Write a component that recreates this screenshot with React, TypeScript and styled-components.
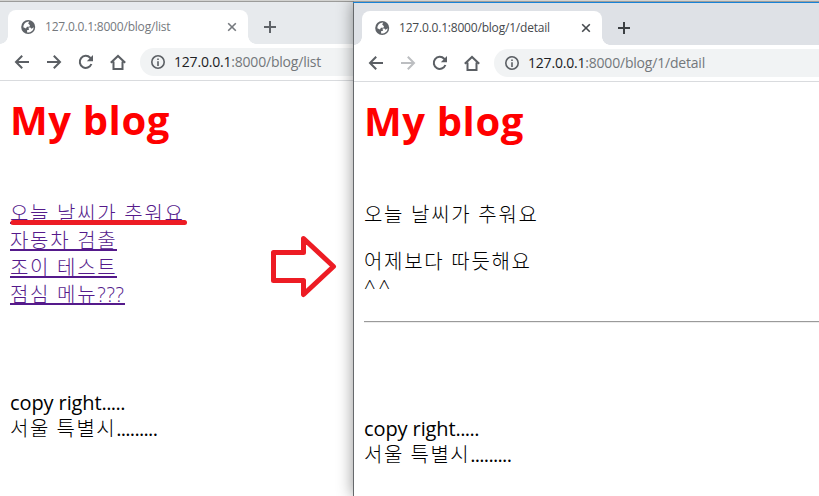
import React from "react";
import styled, { createGlobalStyle } from "styled-components";

const Global = createGlobalStyle`
  * { box-sizing: border-box; }
  html, body { margin: 0; padding: 0; overflow: hidden; background: #fff; }
`;

const latin = `"Open Sans", "Noto Sans", sans-serif`;
const mixed = `"Open Sans", "Noto Sans CJK KR", sans-serif`;

const Desktop = styled.div`
  width: 819px;
  height: 496px;
  border-top: 1px solid #d3d3d1;
  display: grid;
  grid-template-columns: 353px 466px;
  overflow: hidden;
  background: #fff;
  position: relative;
`;

const Window = styled.section<{ $active?: boolean }>`
  height: 495px;
  background: #fff;
  border-top: 1px solid #9c9c9a;
  min-width: 0;
  position: relative;
  ${(p) =>
    p.$active &&
    `border-left: 1px solid #66696c;
     box-shadow: 0 0 15px rgba(0, 0, 0, 0.42);`}
`;

const TitleEdge = styled.div`
  height: 1px;
  margin-left: -1px;
  background: #1883d7;
`;

const TabStrip = styled.div<{ $active?: boolean }>`
  height: 42px;
  padding: 8px 0 0 8px;
  display: flex;
  background: ${(p) => (p.$active ? "#dee1e6" : "#e7eaed")};
`;

const Tab = styled.div<{ $active?: boolean }>`
  width: 240px;
  height: 34px;
  padding: 0 11px 0 13px;
  display: flex;
  align-items: center;
  background: #fff;
  border-radius: 8px 8px 0 0;
  position: relative;
  color: ${(p) => (p.$active ? "#45494d" : "#75797e")};
  &::before, &::after {
    content: "";
    position: absolute;
    bottom: 0;
    width: 8px;
    height: 8px;
  }
  &::before { left: -8px; background: radial-gradient(circle at 0 0, transparent 7.5px, #fff 8px); }
  &::after { right: -8px; background: radial-gradient(circle at 100% 0, transparent 7.5px, #fff 8px); }
`;

const TabTitle = styled.span<{ $spacing: number }>`
  flex: 1;
  margin-left: 8px;
  font: 12px/16px ${latin};
  letter-spacing: ${(p) => p.$spacing}px;
  white-space: nowrap;
`;

const NewTab = styled.div<{ $active?: boolean }>`
  margin: 10px 0 0 15px;
  height: 14px;
  color: ${(p) => (p.$active ? "#3c4043" : "#5f6368")};
`;

const Toolbar = styled.div`
  height: 37px;
  padding: 4px 0 4px 14px;
  display: flex;
  align-items: center;
  border-bottom: 1px solid #d9dbde;
  color: #5b5f64;
`;

const NavButton = styled.span<{ $muted?: boolean }>`
  width: 32px;
  height: 16px;
  flex: none;
  color: ${(p) => (p.$muted ? "#bcbec1" : "inherit")};
`;

const AddressBar = styled.div`
  flex: 1;
  min-width: 0;
  height: 28px;
  margin-left: -2px;
  padding-left: 10px;
  border-radius: 14px 0 0 14px;
  background: #f1f3f4;
  display: flex;
  align-items: center;
`;

const Address = styled.span<{ $spacing: number }>`
  margin-left: 8px;
  font: 14px/20px ${latin};
  letter-spacing: ${(p) => p.$spacing}px;
  color: #202124;
  white-space: nowrap;
`;

const Path = styled.span`
  color: #73777b;
`;

const Icon = styled.svg`
  display: block;
  flex: none;
`;

const Page = styled.main`
  padding: 9px 0 0 10px;
  color: #000;
`;

const Heading = styled.h1`
  margin: 0;
  height: 60px;
  font: 700 40px/60px ${latin};
  letter-spacing: 0.6px;
  color: #ff0000;
`;

const Links = styled.ul`
  list-style: none;
  margin: 50px 0 0;
  padding: 0;
  height: 108px;
`;

const LinkRow = styled.li`
  height: 27px;
  display: flex;
  position: relative;
`;

const textStyle = `
  font: 300 20px/27px ${mixed};
  white-space: pre;
`;

const Anchor = styled.a<{ $spacing: number }>`
  ${textStyle}
  height: 24px;
  line-height: 28px;
  letter-spacing: ${(p) => p.$spacing}px;
  color: #551a8b;
  border-bottom: 2px solid #551a8b;
`;

const Line = styled.p<{ $spacing: number; $gap?: number }>`
  ${textStyle}
  margin: ${(p) => p.$gap ?? 0}px 0 0;
  height: 26px;
  line-height: 26px;
  letter-spacing: ${(p) => p.$spacing}px;
`;

const Run = styled.span<{ $spacing: number; $light?: boolean }>`
  letter-spacing: ${(p) => p.$spacing}px;
  font-weight: ${(p) => (p.$light ? 300 : 400)};
`;

const Rule = styled.hr`
  margin: 20px 0 0;
  border: 0;
  height: 2px;
  border-top: 1px solid #9a9a9a;
  border-bottom: 1px solid #ededed;
`;

const Footer = styled.footer<{ $gap: number }>`
  margin-top: ${(p) => p.$gap}px;
`;

const Marker = styled.svg`
  position: absolute;
  left: 0;
  top: 14px;
`;

const Arrow = styled.svg`
  position: absolute;
  left: 266px;
  top: 228px;
`;

const Globe = () => (
  <Icon width="16" height="16" viewBox="0 0 16 16">
    <circle cx="7.2" cy="8" r="7" fill="#5f6368" />
    <path d="M8.2 2.5 7.2 4.5 9 6.2 8.4 7.8H5.9L5 9.5 2.3 8.2A5.5 5.5 0 0 1 8.2 2.5Z" fill="#fff" />
    <path d="M7.5 8.5h1.9l1.1 1.2L12.8 8.3A5.6 5.6 0 0 1 6.2 13.4L6 11.3l2-.6Z" fill="#fff" />
  </Icon>
);

const Close = () => (
  <Icon width="10" height="10" viewBox="0 0 10 10" stroke="currentColor" strokeWidth="1.6">
    <path d="m1.2 1.2 7.6 7.6M8.8 1.2 1.2 8.8" />
  </Icon>
);

const Plus = () => (
  <Icon width="14" height="14" viewBox="0 0 14 14" stroke="currentColor" strokeWidth="2">
    <path d="M7 1v12M1 7h12" />
  </Icon>
);

const iconProps = {
  width: 16,
  height: 16,
  viewBox: "0 0 16 16",
  fill: "none",
  stroke: "currentColor",
  strokeWidth: 2,
};

const Back = () => (
  <Icon {...iconProps}><path d="M15 8H2.5M8.2 1.8 2 8l6.2 6.2" /></Icon>
);
const Forward = () => (
  <Icon {...iconProps}><path d="M1 8h12.5M7.8 1.8 14 8l-6.2 6.2" /></Icon>
);
const Reload = () => (
  <Icon {...iconProps}>
    <path d="M13.4 10A6 6 0 1 1 12.2 3.8L13 4.6" />
    <path d="M15 1v6.2H8.8Z" fill="currentColor" stroke="none" />
  </Icon>
);
const Home = () => (
  <Icon {...iconProps}><path d="M.8 8.8 8 2l7.2 6.8M3.5 7.5V15h9V7.5" /></Icon>
);
const Info = () => (
  <Icon {...iconProps} strokeWidth={1.6}>
    <circle cx="8" cy="8" r="6.2" />
    <path d="M8 7.2V12M8 4.4V6" />
  </Icon>
);

type ChromeProps = { active?: boolean; path: string; tabSpacing: number; urlSpacing: number };

const Chrome = ({ active, path, tabSpacing, urlSpacing }: ChromeProps) => (
  <header>
    <TabStrip $active={active}>
      <Tab $active={active}>
        <Globe />
        <TabTitle $spacing={tabSpacing}>127.0.0.1:8000{path}</TabTitle>
        <Close />
      </Tab>
      <NewTab $active={active}><Plus /></NewTab>
    </TabStrip>
    <Toolbar>
      <NavButton><Back /></NavButton>
      <NavButton $muted={active}><Forward /></NavButton>
      <NavButton><Reload /></NavButton>
      <NavButton><Home /></NavButton>
      <AddressBar>
        <Info />
        <Address $spacing={urlSpacing}>127.0.0.1<Path>:8000{path}</Path></Address>
      </AddressBar>
    </Toolbar>
  </header>
);

const Copyright = ({ gap }: { gap: number }) => (
  <Footer $gap={gap}>
    <Line $spacing={0}><Run $spacing={-0.1}>copy right</Run><Run $spacing={-0.6}>.....</Run></Line>
    <Line $spacing={1.5}>서울 특별시<Run $spacing={-0.7}>.........</Run></Line>
  </Footer>
);

export default function App() {
  return (
    <>
      <Global />
      <Desktop>
        <Window>
          <Chrome path="/blog/list" tabSpacing={-0.2} urlSpacing={-0.2} />
          <Page>
            <Heading>My blog</Heading>
            <Links>
              <LinkRow>
                <Anchor $spacing={1.7}>오늘 날씨가 추워요</Anchor>
                <Marker width="178" height="12">
                  <path d="M3 8.5H174.5" stroke="#ed1c24" strokeWidth="5" strokeLinecap="round" />
                </Marker>
              </LinkRow>
              <LinkRow><Anchor $spacing={1.7}>자동차 검출</Anchor></LinkRow>
              <LinkRow><Anchor $spacing={1.7}>조이 테스트</Anchor></LinkRow>
              <LinkRow><Anchor $spacing={1.7}>점심 메뉴<Run $light $spacing={0.7}>???</Run></Anchor></LinkRow>
            </Links>
            <Copyright gap={82} />
          </Page>
        </Window>
        <Window $active>
          <TitleEdge />
          <Chrome active path="/blog/1/detail" tabSpacing={-0.2} urlSpacing={-0.2} />
          <Page>
            <Heading>My blog</Heading>
            <Line $gap={51} $spacing={1.7}>오늘 날씨가 추워요</Line>
            <Line $gap={21} $spacing={1.7}>어제보다 따듯해요</Line>
            <Line $spacing={3}>^^</Line>
            <Rule />
            <Copyright gap={93} />
          </Page>
        </Window>
        <Arrow width="74" height="74" viewBox="0 0 74 74">
          <path d="M7.5 23.5H37.5V9.5L67.5 37.5 37.5 65.5V51.5H7.5Z" fill="#fff" stroke="#ed1c24" strokeWidth="5" strokeLinejoin="round" />
        </Arrow>
      </Desktop>
    </>
  );
}
